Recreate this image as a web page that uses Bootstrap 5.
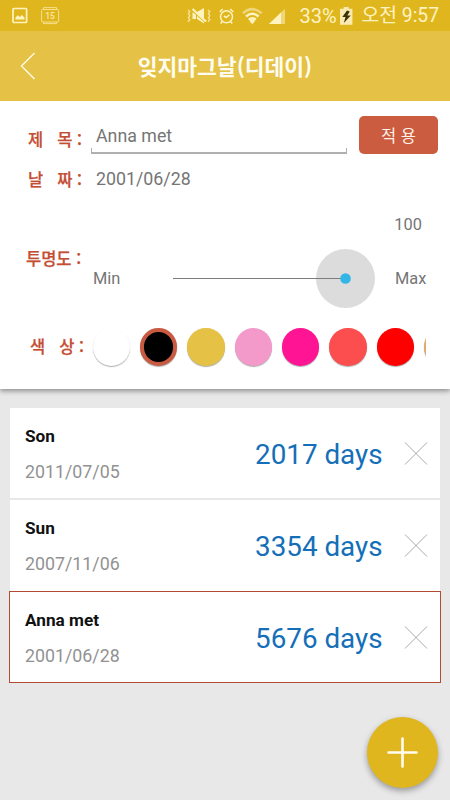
<!DOCTYPE html>
<html lang="ko">
<head>
<meta charset="utf-8">
<meta name="viewport" content="width=device-width, initial-scale=1">
<title>잊지마그날</title>
<link href="https://cdn.jsdelivr.net/npm/bootstrap@5.3.0/dist/css/bootstrap.min.css" rel="stylesheet">
<style>
body{font-family:Roboto,"Noto Sans CJK KR",sans-serif;background:#e8e8e8;color:#757575;font-size:17.8px;line-height:24px;height:800px;overflow:hidden}
svg{display:block;flex:none}
.status{height:31px;background:#e0b61e;color:#fff3c0;padding:0 11px 0 12px;font-size:20px}
.status .clock{font-size:19.3px;margin-left:9px;padding-top:1px}
.calendar-icon{margin-left:13px}
.percent{margin-left:14px;padding-top:1px}
.battery{margin-left:3px}
.appbar{height:70px;background:#e5c245;z-index:2}
.appbar h1{font:700 21.5px/30px "Noto Sans CJK KR",sans-serif;color:#fffdf0}
.back{left:20px}
.editor{height:288px;box-shadow:0 2px 5px rgba(0,0,0,.4);padding-top:15px}
.lbl{font:500 16.5px/24px "Noto Sans CJK KR",sans-serif;color:#c34e34;-webkit-text-stroke:.25px #c34e34;width:54px;flex:none}
.lbl-title{margin:11px 9px 0 28px}
.lbl-date{margin:0 14px 0 28px}
.lbl-opacity{margin:-41px 11px 0 26px;width:56px}
.lbl-color{margin:-3px 7px 0 30px}
.title-input{width:256px;height:38px;padding:8px 5px 0;position:relative}
.title-input::after{content:"";position:absolute;left:0;right:0;bottom:0;height:6px;border:solid #b0b0b0;border-width:0 1px 2px}
.btn-apply{width:79px;height:38px;margin-left:12px;background:#cb5c3f;color:#fff1e8;border-radius:5px;font:400 16.5px/24px "Noto Sans CJK KR",sans-serif;padding:0}
.date-row{margin-top:13px}
.percent-row{margin-top:22px;padding-right:28px}
.slider-row{margin-top:11px}
.color-row{margin-top:18px}
.small-txt{font-size:16.4px}
.min-txt{width:80px;padding-top:1px}
.max-txt{margin-left:19px;padding-top:1px}
.track{height:60px;width:203px}
.sw{width:37.4px;height:37.4px;flex:none;box-shadow:0 1px 1px rgba(0,0,0,.32)}
.swatches{gap:10px;width:335px;height:42px;padding-left:1.5px}
.c-white{background:#fff}.c-black{background:#000;border:4px solid #c85a42}.c-gold{background:#e5c245}.c-pink{background:#f49aca}
.c-deep{background:#ff1493}.c-coral{background:#fc4e4e}.c-red{background:#f00}.c-orange{background:#e5a866}
.days{margin:19px 9px 0}
.day{height:92px;margin:0 1px;padding:15px 12px 0 15px;background:#fff;border-bottom:2px solid #e8e8e8}
.day:nth-child(2){border-bottom:0;height:91px}
.day.sel{margin:0;border:1px solid #b34a32;padding:15px 12px 0 15px}
.day h2{font-size:17.2px;line-height:26px;font-weight:700;color:#111;margin:0 0 10px}
.day .date{color:#929292;line-height:26px}
.count{font-size:27.8px;line-height:34px;color:#146fb8;margin:14.500px 19.500px 0 0}
.remove{margin-top:16.500px}
.fab{position:absolute;left:367px;top:717px;width:71px;height:71px;background:#e0b61e;box-shadow:0 3px 6px rgba(0,0,0,.35)}
</style>
</head>
<body>
<div class="status d-flex align-items-center">
  <svg width="16" height="17" viewBox="0 0 16 17"><rect x="1" y="1.5" width="13.6" height="14" rx="1" fill="none" stroke="#fff3c0" stroke-width="1.7"/><path d="M3.500 12.500V10.500L5.800 8.300 7.800 10 9.800 8l2.700 2.500v2z" fill="#fff3c0"/></svg>
  <svg class="calendar-icon" width="19" height="18" viewBox="0 0 19 18"><g fill="none" stroke="#f6df8d"><rect x=".6" y="2.500" width="17" height="12.500" rx="1"/><path d="M2.500 2.500V.6h13v1.900M2.500 15v1.600h13V15"/></g><text x="9.100" y="12" text-anchor="middle" font-size="8.500" font-family="Roboto" font-weight="500" fill="#f9e7a4">15</text></svg>
  <div class="d-flex align-items-center ms-auto">
    <svg width="98" height="20" viewBox="188 6 98 20"><g fill="#fff3c0"><path d="M193.500 12.500h3.500v6.500h-3.500zM198 12l7-4v15.500l-7-4.500z"/><path d="M192.500 10l14 12.500" stroke="#e0b61e" stroke-width="1.200"/><path d="M193.500 9l13.500 12.500" stroke="#fff3c0" stroke-width="2"/></g>
    <g fill="none" stroke="#f8e39c" stroke-width="1.300"><path d="M189 10l1.800 1.700-1.400 2 1.400 2-1.400 2 1.400 2-1.800 2M209 10l1.800 1.700-1.400 2 1.400 2-1.400 2 1.400 2-1.800 2"/></g>
    <g fill="none" stroke="#fff3c0" stroke-width="1.500"><circle cx="227.500" cy="16.700" r="6"/><path d="M220.700 12l3-3M234.300 12l-3-3M230.500 14.700l-3.300 2.800-2.300-1.500M223.200 21.500l-1.500 2M231.700 21.500l1.500 2"/></g>
    <path d="M244 13.200Q253.300 5 262.600 13.200" fill="none" stroke="#f0d67a" stroke-width="2.500"/><path d="M247 16.500Q253.300 11 259.600 16.500M249.800 19.700Q253.300 17 256.800 19.700" fill="none" stroke="#fff3c0" stroke-width="2.500"/><path d="M250.500 21L253.300 24.300 256 21Q253.300 18.500 250.500 21" fill="#fff3c0"/>
    <path d="M270 24L286 8.800V24z" fill="#f0d67a"/><path d="M270 24l12-11.400V24z" fill="#fff3c0"/></svg>
    <span class="percent">33%</span>
    <svg class="battery" width="13" height="18" viewBox="0 0 13 18"><path d="M0 1.700h3.700V0h5v1.700h3.700v16H0z" fill="#fbeab0"/><path d="M7 3.500L2.300 10h3.200l-1.700 6 7-7.500H7.300l2.500-4z" fill="#3c3208"/></svg>
    <span class="clock">오전 9:57</span>
  </div>
</div>
<header class="appbar d-flex align-items-center position-relative justify-content-center">
  <svg class="back position-absolute" width="16" height="28" viewBox="0 0 16 28"><path d="M14.500 1L1.500 14l13 13" fill="none" stroke="#fffbe8" stroke-width="1.400"/></svg>
  <h1 class="m-0">잊지마그날(디데이)</h1>
</header>
<section class="editor bg-white position-relative">
  <div class="d-flex">
    <div class="lbl lbl-title d-flex justify-content-between"><span>제</span><span>목 :</span></div>
    <div class="title-input">Anna met</div>
    <button class="btn btn-apply">적 용</button>
  </div>
  <div class="date-row d-flex">
    <div class="lbl lbl-date d-flex justify-content-between"><span>날</span><span>짜 :</span></div>
    <div>2001/06/28</div>
  </div>
  <div class="percent-row small-txt text-end">100</div>
  <div class="slider-row d-flex align-items-center">
    <div class="lbl lbl-opacity text-nowrap">투명도 :</div>
    <div class="small-txt min-txt">Min</div>
    <svg class="track" viewBox="0 0 203 60"><circle cx="172.500" cy="30.500" r="29.500" fill="#dcdcdc"/><path d="M0 30.500h172" stroke="#7d7d7d" stroke-width="1"/><circle cx="172.500" cy="30.500" r="5.300" fill="#33b5e5"/></svg>
    <div class="small-txt max-txt">Max</div>
  </div>
  <div class="color-row d-flex align-items-center">
    <div class="lbl lbl-color d-flex justify-content-between"><span>색</span><span>상 :</span></div>
    <div class="swatches d-flex align-items-center overflow-hidden">
      <span class="sw rounded-circle c-white"></span><span class="sw rounded-circle c-black"></span><span class="sw rounded-circle c-gold"></span><span class="sw rounded-circle c-pink"></span><span class="sw rounded-circle c-deep"></span><span class="sw rounded-circle c-coral"></span><span class="sw rounded-circle c-red"></span><span class="sw rounded-circle c-orange"></span>
    </div>
  </div>
</section>
<main class="days">
  <article class="day d-flex"><div class="me-auto"><h2>Son</h2><div class="date">2011/07/05</div></div><div class="count">2017 days</div><svg class="remove" width="26" height="26" viewBox="0 0 26 26"><path d="M3 2.500l22 22M25 2.500l-22 22" stroke="#aaa" fill="none"/></svg></article>
  <article class="day d-flex"><div class="me-auto"><h2>Sun</h2><div class="date">2007/11/06</div></div><div class="count">3354 days</div><svg class="remove" width="26" height="26" viewBox="0 0 26 26"><path d="M3 2.500l22 22M25 2.500l-22 22" stroke="#aaa" fill="none"/></svg></article>
  <article class="day sel d-flex"><div class="me-auto"><h2>Anna met</h2><div class="date">2001/06/28</div></div><div class="count">5676 days</div><svg class="remove" width="26" height="26" viewBox="0 0 26 26"><path d="M3 2.500l22 22M25 2.500l-22 22" stroke="#aaa" fill="none"/></svg></article>
</main>
<button class="fab btn rounded-circle p-0 border-0 d-flex align-items-center justify-content-center" aria-label="Add"><svg width="31" height="31" viewBox="0 0 31 31"><path d="M15.500 1.500v28M1.500 15.500h28" stroke="#fffdf0" stroke-width="2.600" stroke-linecap="round"/></svg></button>
<script src="https://cdn.jsdelivr.net/npm/bootstrap@5.3.0/dist/js/bootstrap.bundle.min.js"></script>
</body>
</html>
